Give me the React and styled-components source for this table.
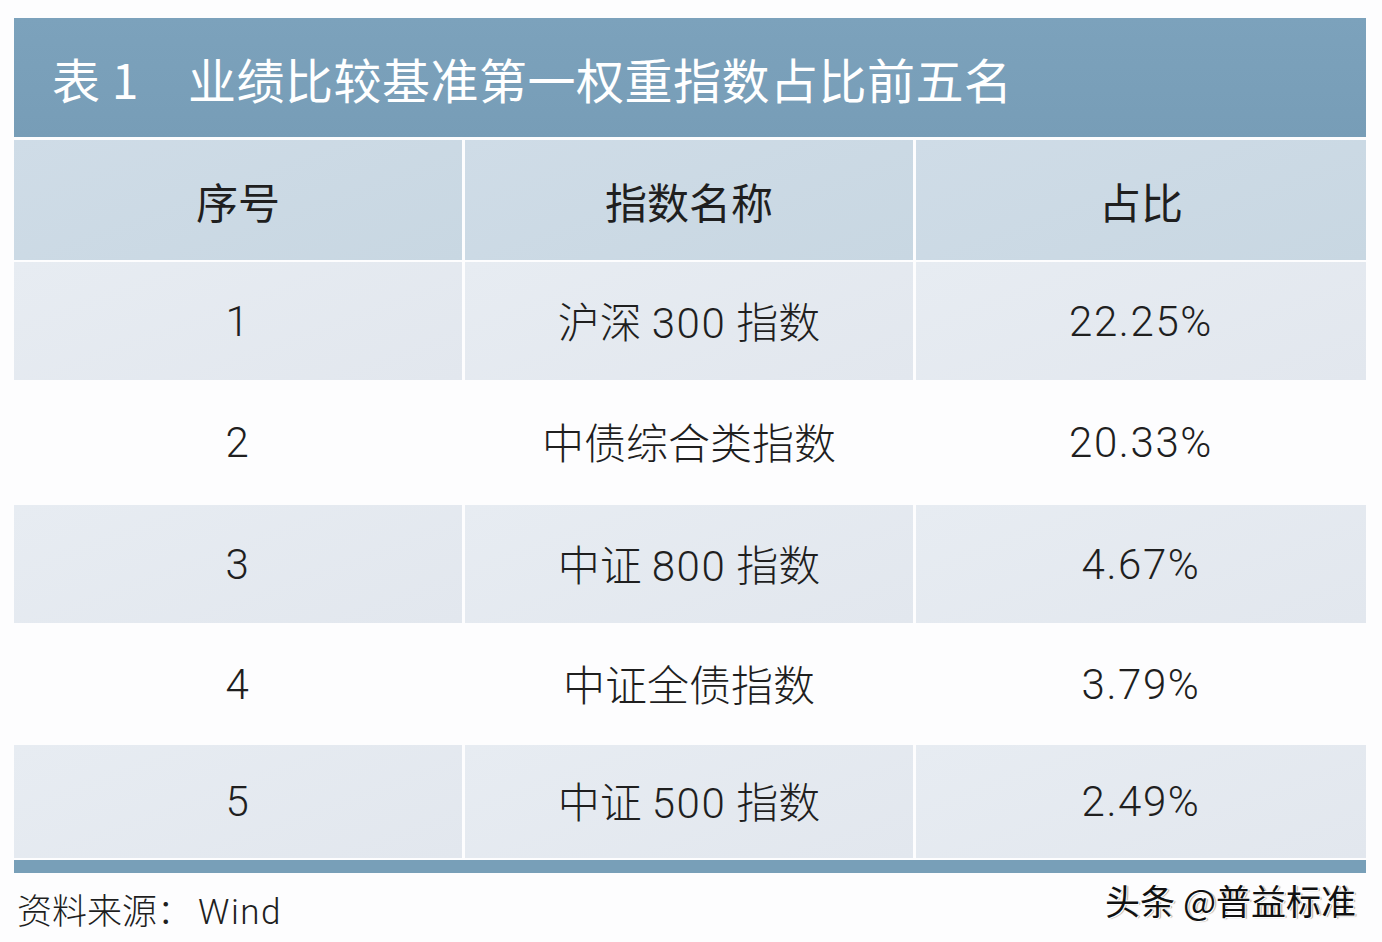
import React from "react";
import styled, { createGlobalStyle } from "styled-components";

const Global = createGlobalStyle`
  html, body { margin: 0; padding: 0; background: #fdfdfe; }
  body { width: 1382px; height: 942px; overflow: hidden; }
`;

const CJK = `"Noto Sans CJK SC", "Noto Sans", sans-serif`;
const NUM = `Roboto, "Noto Sans CJK SC", sans-serif`;

const Page = styled.div`
  width: 1382px;
  height: 942px;
  padding: 18px 16px 0 14px;
  box-sizing: border-box;
  display: flex;
  flex-direction: column;
  font-family: ${CJK};
`;

const TitleBar = styled.div`
  height: 119px;
  background: linear-gradient(180deg, #7ca2bc 0%, #779db7 100%);
  display: flex;
  align-items: center;
  padding-left: 38px;
  color: #ffffff;
  font-size: 48px;
  font-weight: 400;
  letter-spacing: 0.5px;
  margin-bottom: 3px;
`;

const TitleNo = styled.span`
  width: 136px;
  flex: none;
`;

const Row = styled.div`
  display: grid;
  grid-template-columns: 448px 448px 450px;
  column-gap: 3px;
  height: ${(p) => p.$h}px;
  margin-bottom: ${(p) => p.$mb || 0}px;
`;

const Cell = styled.div`
  display: flex;
  align-items: center;
  justify-content: center;
  color: #1f1f1f;
  font-size: 42px;
  font-weight: ${(p) => (p.$head ? 400 : 300)};
  font-family: ${(p) => (p.$num ? NUM : CJK)};
  letter-spacing: ${(p) => (p.$num ? "1.6px" : "0")};
  padding-top: ${(p) => (p.$num ? "0" : "0")};
  background: ${(p) =>
    p.$head
      ? "linear-gradient(160deg, #cfdce7 0%, #c8d7e2 100%)"
      : p.$tinted
      ? "linear-gradient(160deg, #e7ecf2 0%, #e2e7ee 100%)"
      : "transparent"};
`;

const Mixed = styled.span`
  font-family: ${CJK};
  font-weight: 300;
  margin-top: -4px;
`;

const Digits = styled.span`
  font-family: ${NUM};
  font-weight: 300;
  letter-spacing: 1.6px;
  margin: 0 10px;
`;

const BottomBar = styled.div`
  height: 13px;
  background: #789fb8;
  margin-top: 2px;
`;

const Footer = styled.div`
  display: flex;
  justify-content: space-between;
  align-items: flex-start;
  padding: 14px 10px 0 3px;
`;

const Source = styled.div`
  font-size: 35px;
  font-weight: 300;
  color: #1f1f1f;
  font-family: ${CJK};
  line-height: 44px;
`;

const Wind = styled.span`
  font-family: ${NUM};
  font-weight: 300;
  letter-spacing: 1.5px;
  margin-left: 6px;
`;

const Watermark = styled.div`
  font-size: 35px;
  color: #111;
  font-weight: 400;
  line-height: 40px;
  margin-top: -7px;
  text-shadow: 1px 1px 0 #fff, -1px -1px 0 #fff, 2px 1px 1px rgba(0,0,0,0.35);
`;

const rows = [
  { no: "1", name: ["沪深", "300", "指数"], pct: "22.25%", h: 118, tinted: true },
  { no: "2", name: ["中债综合类指数"], pct: "20.33%", h: 125, tinted: false },
  { no: "3", name: ["中证", "800", "指数"], pct: "4.67%", h: 118, tinted: true },
  { no: "4", name: ["中证全债指数"], pct: "3.79%", h: 122, tinted: false },
  { no: "5", name: ["中证", "500", "指数"], pct: "2.49%", h: 113, tinted: true },
];

export default function App() {
  return (
    <>
      <Global />
      <Page>
        <TitleBar>
          <TitleNo>表 1</TitleNo>
          <span>业绩比较基准第一权重指数占比前五名</span>
        </TitleBar>
        <Row $h={120} $mb={2}>
          <Cell $head>序号</Cell>
          <Cell $head>指数名称</Cell>
          <Cell $head>占比</Cell>
        </Row>
        {rows.map((r) => (
          <Row key={r.no} $h={r.h}>
            <Cell $tinted={r.tinted} $num>
              {r.no}
            </Cell>
            <Cell $tinted={r.tinted}>
              {r.name.length === 1 ? (
                <Mixed>{r.name[0]}</Mixed>
              ) : (
                <Mixed>
                  {r.name[0]}
                  <Digits>{r.name[1]}</Digits>
                  {r.name[2]}
                </Mixed>
              )}
            </Cell>
            <Cell $tinted={r.tinted} $num>
              {r.pct}
            </Cell>
          </Row>
        ))}
        <BottomBar />
        <Footer>
          <Source>
            资料来源：<Wind>Wind</Wind>
          </Source>
          <Watermark>头条 @普益标准</Watermark>
        </Footer>
      </Page>
    </>
  );
}
